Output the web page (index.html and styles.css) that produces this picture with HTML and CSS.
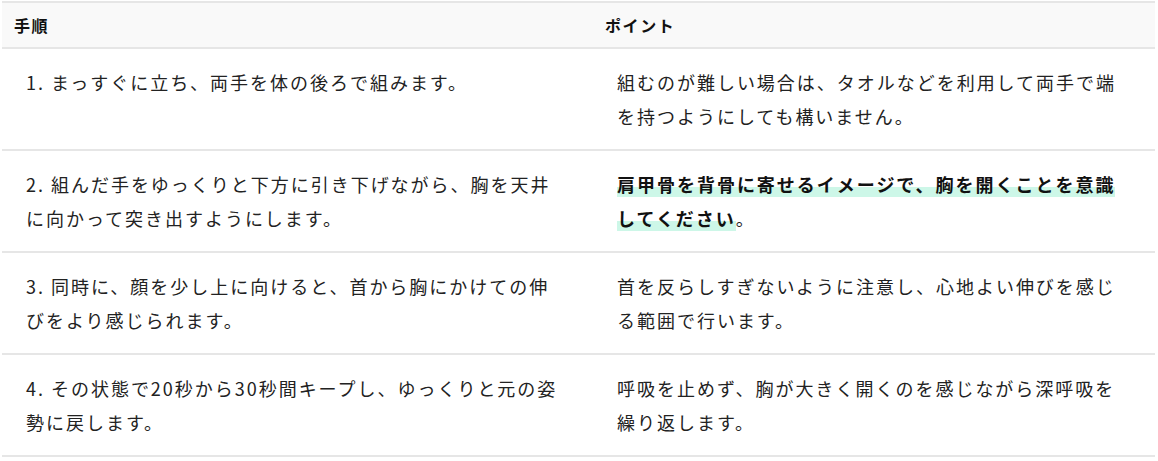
FILE: index.html
```html
<!DOCTYPE html>
<html lang="ja">
<head>
<meta charset="utf-8">
<link rel="stylesheet" href="styles.css">
</head>
<body>
<div class="table">
  <div class="row head">
    <div class="cell">手順</div>
    <div class="cell">ポイント</div>
  </div>
  <div class="row">
    <div class="cell">1. まっすぐに立ち、両手を体の後ろで組みます。</div>
    <div class="cell">組むのが難しい場合は、タオルなどを利用して両手で端を持つようにしても構いません。</div>
  </div>
  <div class="row">
    <div class="cell">2. 組んだ手をゆっくりと下方に引き下げながら、胸を天井に向かって突き出すようにします。</div>
    <div class="cell"><strong class="mark">肩甲骨を背骨に寄せるイメージで、胸を開くことを意識してください</strong>。</div>
  </div>
  <div class="row">
    <div class="cell">3. 同時に、顔を少し上に向けると、首から胸にかけての伸びをより感じられます。</div>
    <div class="cell">首を反らしすぎないように注意し、心地よい伸びを感じる範囲で行います。</div>
  </div>
  <div class="row">
    <div class="cell">4. その状態で20秒から30秒間キープし、ゆっくりと元の姿勢に戻します。</div>
    <div class="cell">呼吸を止めず、胸が大きく開くのを感じながら深呼吸を繰り返します。</div>
  </div>
</div>
</body>
</html>
```

FILE: styles.css
```css
html, body {
  margin: 0;
  padding: 0;
  background: #fff;
}
body {
  padding: 1px 3px 0 2px;
  font-family: "Noto Sans CJK JP", "Noto Sans", sans-serif;
  color: #222;
}
.table {
  border-top: 2px solid #e6e6e6;
  width: 1153px;
}
.row {
  display: grid;
  grid-template-columns: 591px 1fr;
  border-bottom: 2px solid #e6e6e6;
}
.row .cell {
  padding: 16px 24px;
  font-size: 18px;
  line-height: 34px;
  letter-spacing: 0.11em;
}
.row .cell:first-child {
  padding-right: 26px;
}
.head {
  background: #f9f9f9;
}
.head .cell {
  padding: 10px 12px;
  font-size: 16px;
  line-height: 24px;
  font-weight: 700;
  letter-spacing: 0.1em;
  color: #111;
}
.row.head .cell:first-child {
  padding-right: 12px;
}
.mark {
  font-weight: 700;
  color: #111;
  background: linear-gradient(transparent 62%, #cdf7e8 62%);
}
```
